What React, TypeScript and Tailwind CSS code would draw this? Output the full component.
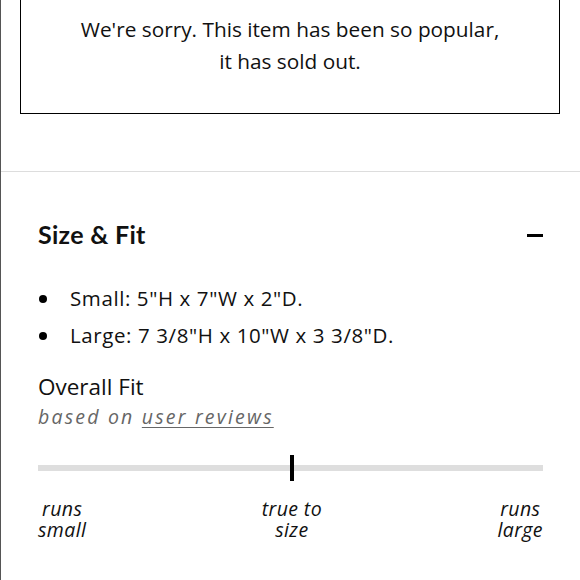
export default function App() {
  return (
    <div className="w-[580px] h-[580px] overflow-hidden bg-white border-l border-[#555] text-[#111]" style={{ fontFamily: '"Open Sans", sans-serif' }}>
      <div className="pl-[19px] pr-[20px]">
        <div className="-mt-[10px] border border-black pt-[22px] pb-[36px] text-center text-[20.8px] leading-[32px]">
          <p>We're sorry. This item has been so popular,</p>
          <p>it has sold out.</p>
        </div>
      </div>

      <div className="mt-[57px] border-t border-[#dddddd]" />

      <div className="pl-[37px] pr-[37px] pt-[47px]">
        <div className="flex items-center justify-between h-[32px]">
          <h2 className="text-[25px] font-bold leading-[32px] tracking-[0.3px] mt-[-3px]" style={{ fontFamily: 'Lato, sans-serif' }}>Size &amp; Fit</h2>
          <span className="block w-[16px] h-[3px] bg-black" />
        </div>

        <ul className="mt-[29px] text-[20.5px] leading-[37px] tracking-[0.6px]">
          <li className="flex items-center">
            <span className="w-[8px] h-[8px] rounded-full bg-black ml-[1px] mr-[23px]" />
            Small: 5"H x 7"W x 2"D.
          </li>
          <li className="flex items-center">
            <span className="w-[8px] h-[8px] rounded-full bg-black ml-[1px] mr-[23px]" />
            Large: 7 3/8"H x 10"W x 3 3/8"D.
          </li>
        </ul>

        <h3 className="mt-[18px] text-[22.5px] leading-[30px]">Overall Fit</h3>
        <p className="text-[19.5px] leading-[30px] italic text-[#666] tracking-[2.2px]">
          based on <span className="underline underline-offset-[3px]">user reviews</span>
        </p>

        <div className="relative mt-[23px] h-[26px]">
          <div className="absolute left-0 right-0 top-[10px] h-[6px] bg-[#dedede]" />
          <div className="absolute left-[252px] top-0 w-[4px] h-[26px] bg-black" />
        </div>

        <div className="mt-[17px] flex justify-between text-[19.5px] leading-[21px] italic text-center tracking-[0.4px]">
          <span className="block">runs<br />small</span>
          <span className="block">true to<br />size</span>
          <span className="block">runs<br />large</span>
        </div>
      </div>
    </div>
  );
}
